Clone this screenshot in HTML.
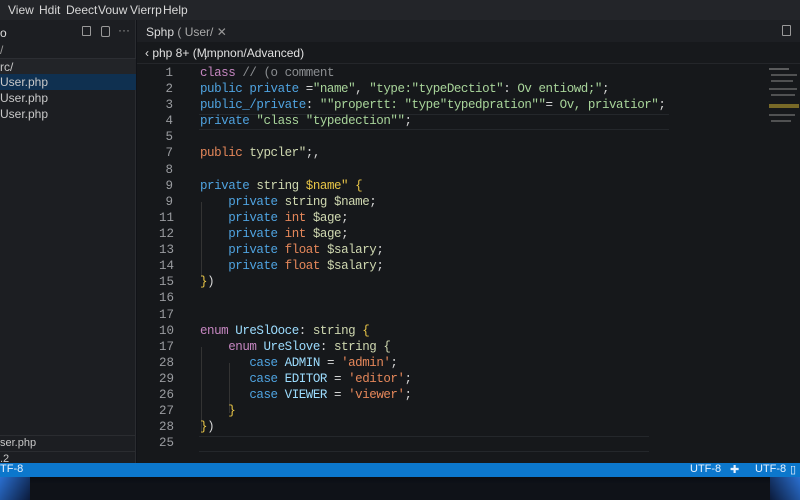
<!DOCTYPE html>
<html><head><style>
*{margin:0;padding:0;box-sizing:border-box}
body{width:800px;height:500px;background:#111318;overflow:hidden;font-family:"Liberation Sans",sans-serif;position:relative;color:#ccc}
.menu{position:absolute;left:0;top:0;width:800px;height:20px;background:#232529;font-size:12px;color:#d8d8d8}
.menu span{position:absolute;top:3px}
.side{position:absolute;left:0;top:20px;width:136px;height:443px;background:#1c1e22;border-right:1px solid #2a2c30;font-size:12px;color:#c8c8c8}
.side div{position:absolute;left:0;width:136px;height:16px;padding-top:1px}
.tabs{position:absolute;left:137px;top:20px;width:663px;height:22px;background:#1d1f23;font-size:12px;color:#ddd}
.bc{position:absolute;left:137px;top:42px;width:663px;height:22px;background:#17191c;font-size:12px;color:#e0e0e0;border-bottom:1px solid #24262a}
.ed{position:absolute;left:137px;top:64px;width:663px;height:399px;background:#16181b}
.code{position:absolute;left:0;top:1px;font-family:"Liberation Mono",monospace;font-size:12.5px;letter-spacing:-0.45px;line-height:16.1px;white-space:pre}
.ln{position:absolute;left:22px;width:14px;text-align:right;color:#9a9ca0;letter-spacing:0}
.tx{position:absolute;left:63px;color:#d4d4d4}
.k{color:#4fa3e0}.p{color:#c586c0}.s{color:#a8d49a}.o{color:#e5875a}.y{color:#e8c547}.c{color:#8a8d90}.g{color:#cfd8b0}.t{color:#9cdcfe}
.status{position:absolute;left:0;top:463px;width:800px;height:14px;background:#0c77cc;font-size:11px;color:#e8f2ff}
.status span{position:absolute;top:0px}
.bottom{position:absolute;left:0;top:477px;width:800px;height:23px;background:linear-gradient(#0b0d12,#141c2c)}
</style></head><body>
<div class="menu"><span style="left:8px">View</span><span style="left:39px">Hdit</span><span style="left:66px">Deect</span><span style="left:98px">Vouw</span><span style="left:130px">Vierrp</span><span style="left:163px">Help</span></div>
<div class="side">
<div style="top:5px;color:#ddd">o</div>
<div style="top:22px;color:#999">/</div>
<div style="top:38px;background:#222428;border-top:1px solid #2c2e33">rc/</div>
<div style="top:54px;background:#0f3050">User.php</div>
<div style="top:70px">User.php</div>
<div style="top:86px">User.php</div>
<div style="top:415px;border-top:1px solid #2a2c30;font-size:11px">ser.php</div>
<div style="top:431px;border-top:1px solid #2a2c30;font-size:11px">.2</div>
<span style="position:absolute;left:82px;top:6px;width:9px;height:10px;border:1px solid #999;border-radius:1px"></span>
<span style="position:absolute;left:101px;top:6px;width:9px;height:11px;border:1px solid #999;border-radius:2px"></span>
<span style="position:absolute;left:118px;top:3px;color:#999">···</span>
</div>
<div class="tabs"><span style="position:absolute;left:9px;top:5px">Sphp <span style="color:#aaa">( User/</span>  <span style="color:#999">✕</span></span>
<span style="position:absolute;left:645px;top:5px;width:9px;height:11px;border:1px solid #999;border-radius:1px"></span></div>
<div class="bc"><span style="position:absolute;left:8px;top:4px">‹ php 8+ (Ӎmpnon/Advanced)</span></div>
<div class="ed">
<div style="position:absolute;left:62px;top:50px;width:470px;height:16px;border-top:1px solid #24272b;border-bottom:1px solid #24272b"></div>
<div style="position:absolute;left:62px;top:372px;width:450px;height:16px;border-top:1px solid #24272b;border-bottom:1px solid #24272b"></div>
<div style="position:absolute;left:64px;top:138px;width:1px;height:75px;background:#333"></div>
<div style="position:absolute;left:64px;top:283px;width:1px;height:85px;background:#333"></div>
<div style="position:absolute;left:92px;top:299px;width:1px;height:50px;background:#333"></div>
<div class="code">
<div class="ln" style="top:0">1</div><div class="ln" style="top:16px">2</div><div class="ln" style="top:32px">3</div><div class="ln" style="top:48px">4</div><div class="ln" style="top:64px">5</div><div class="ln" style="top:80px">7</div><div class="ln" style="top:97px">8</div><div class="ln" style="top:113px">9</div><div class="ln" style="top:129px">9</div><div class="ln" style="top:145px">11</div><div class="ln" style="top:161px">12</div><div class="ln" style="top:177px">13</div><div class="ln" style="top:193px">14</div><div class="ln" style="top:209px">15</div><div class="ln" style="top:225px">16</div><div class="ln" style="top:242px">17</div><div class="ln" style="top:258px">10</div><div class="ln" style="top:274px">17</div><div class="ln" style="top:290px">28</div><div class="ln" style="top:306px">29</div><div class="ln" style="top:322px">26</div><div class="ln" style="top:338px">27</div><div class="ln" style="top:354px">28</div><div class="ln" style="top:370px">25</div>
<div class="tx" style="top:0"><span class="p">class</span> <span class="c">// (o comment</span></div>
<div class="tx" style="top:16px"><span class="k">public private</span> =<span class="s">"name"</span>, <span class="s">"type:"typeDectiot"</span>: <span class="s">Ov entiowd;"</span>;</div>
<div class="tx" style="top:32px"><span class="k">public_/private</span>: <span class="s">""propertt: "type"typedpration""</span>= <span class="s">Ov, privatior"</span>;</div>
<div class="tx" style="top:48px"><span class="k">private</span> <span class="s">"class "typedection""</span>;</div>
<div class="tx" style="top:80px"><span class="o">public</span> <span class="g">typcler"</span>;,</div>
<div class="tx" style="top:113px"><span class="k">private</span> <span class="g">string</span> <span class="y">$name"</span> <span class="y">{</span></div>
<div class="tx" style="top:129px">    <span class="k">private</span> <span class="g">string</span> <span class="g">$name</span>;</div>
<div class="tx" style="top:145px">    <span class="k">private</span> <span class="o">int</span> <span class="g">$age</span>;</div>
<div class="tx" style="top:161px">    <span class="k">private</span> <span class="o">int</span> <span class="g">$age</span>;</div>
<div class="tx" style="top:177px">    <span class="k">private</span> <span class="o">float</span> <span class="g">$salary</span>;</div>
<div class="tx" style="top:193px">    <span class="k">private</span> <span class="o">float</span> <span class="g">$salary</span>;</div>
<div class="tx" style="top:209px"><span class="y">}</span>)</div>
<div class="tx" style="top:258px"><span class="p">enum</span> <span class="t">UreSlOoce</span>: <span class="g">string</span> <span class="y">{</span></div>
<div class="tx" style="top:274px">    <span class="p">enum</span> <span class="t">UreSlove</span>: <span class="g">string</span> <span class="g">{</span></div>
<div class="tx" style="top:290px">       <span class="k">case</span> <span class="t">ADMIN</span> = <span class="o">'admin'</span>;</div>
<div class="tx" style="top:306px">       <span class="k">case</span> <span class="t">EDITOR</span> = <span class="o">'editor'</span>;</div>
<div class="tx" style="top:322px">       <span class="k">case</span> <span class="t">VIEWER</span> = <span class="o">'viewer'</span>;</div>
<div class="tx" style="top:338px">    <span class="y">}</span></div>
<div class="tx" style="top:354px"><span class="y">}</span>)</div>
</div>
<div style="position:absolute;left:630px;top:0;width:33px;height:90px;opacity:.6">
<div style="margin:4px 0 0 2px;height:2px;width:20px;background:#888"></div>
<div style="margin:4px 0 0 4px;height:2px;width:26px;background:#777"></div>
<div style="margin:4px 0 0 4px;height:2px;width:22px;background:#777"></div>
<div style="margin:6px 0 0 2px;height:2px;width:28px;background:#777"></div>
<div style="margin:4px 0 0 4px;height:2px;width:24px;background:#777"></div>
<div style="margin:8px 0 0 2px;height:4px;width:30px;background:#b9a030"></div>
<div style="margin:6px 0 0 2px;height:2px;width:26px;background:#777"></div>
<div style="margin:4px 0 0 4px;height:2px;width:20px;background:#777"></div>
</div>
</div>
<div class="status"><span style="left:0">TF-8</span><span style="left:690px">UTF-8</span><span style="left:730px">✚</span><span style="left:755px">UTF-8</span><span style="left:790px">▯</span></div>
<div class="bottom"><div style="position:absolute;left:25px;top:6px;width:750px;height:17px;background:#0f1218;border-radius:4px"></div>
<div style="position:absolute;left:0;top:0;width:30px;height:23px;background:linear-gradient(120deg,#2a6fd0,#0b1a3a)"></div>
<div style="position:absolute;right:0;top:0;width:30px;height:23px;background:linear-gradient(240deg,#2a6fd0,#0b1a3a)"></div></div>
</body></html>
